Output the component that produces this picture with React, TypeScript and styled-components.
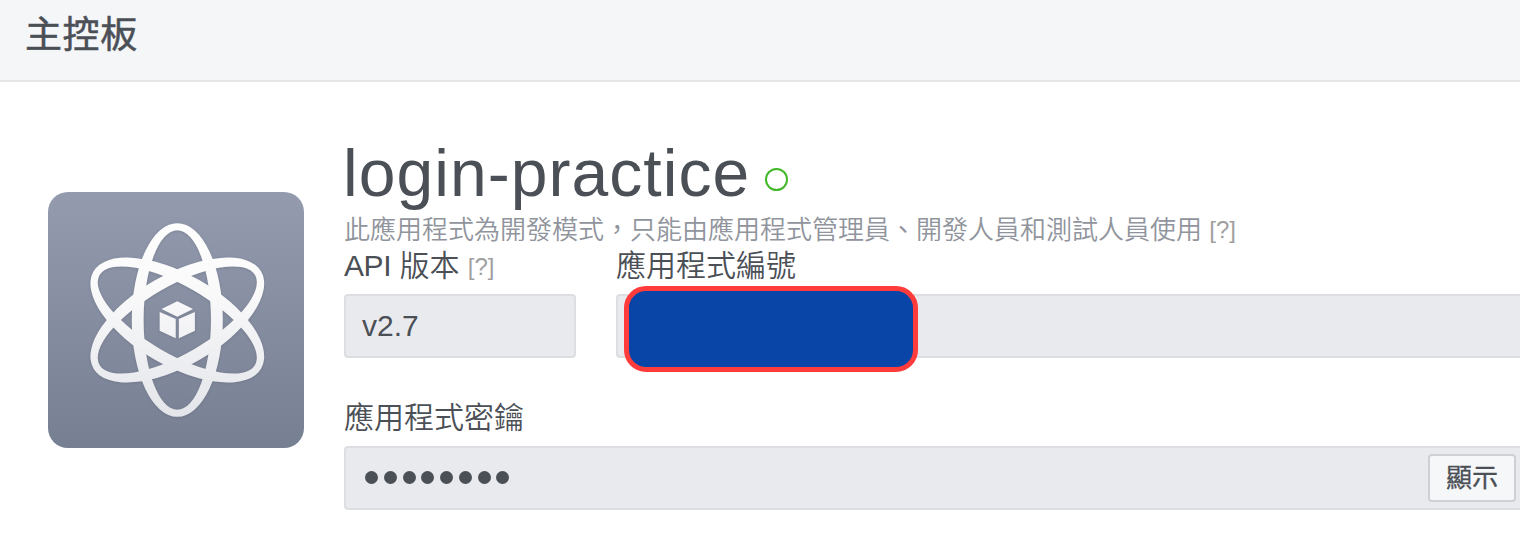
import React from "react";
import styled, { createGlobalStyle } from "styled-components";

const GlobalStyle = createGlobalStyle`
  * { box-sizing: border-box; }
  body {
    margin: 0;
    background: #fff;
    color: #4b4f56;
    font-family: "Liberation Sans", "Noto Sans CJK TC", sans-serif;
    overflow: hidden;
  }
`;

const Page = styled.div`
  width: 100%;
  height: 558px;
  overflow: hidden;
`;

const Header = styled.header`
  height: 82px;
  padding: 8px 0 0 25px;
  background: #f5f6f8;
  border-bottom: 2px solid #e5e5e5;
`;

const HeaderTitle = styled.h1`
  margin: 0;
  font-size: 37px;
  line-height: 56px;
  font-weight: 400;
  letter-spacing: 0.6px;
  -webkit-text-stroke: 0.5px currentColor;
`;

const Main = styled.main`
  display: flex;
  gap: 40px;
  padding: 60px 0 0 48px;
`;

const AppIcon = styled.svg`
  flex: none;
  width: 256px;
  height: 256px;
  margin-top: 50px;
`;

const Details = styled.section`
  flex: 1;
  min-width: 0;
`;

const NameRow = styled.div`
  display: flex;
  height: 72px;
`;

const AppName = styled.h2`
  margin: 0;
  width: 421px;
  font-size: 66px;
  line-height: 62px;
  font-weight: 400;
  letter-spacing: 1.05px;
  text-indent: -1px;
  white-space: nowrap;
`;

const StatusDot = styled.span`
  width: 23px;
  height: 23px;
  margin-top: 26px;
  border: 2px solid #42b72a;
  border-radius: 50%;
`;

const ModeNote = styled.p`
  margin: 0;
  height: 32px;
  font-size: 26px;
  line-height: 32px;
  font-weight: 350;
  color: #90949c;
  white-space: nowrap;
`;

const Help = styled.span<{ $size: number }>`
  position: relative;
  top: -1px;
  font-size: ${(p) => p.$size}px;
  font-weight: 400;
  color: #a0a0a0;
`;

const FieldRow = styled.div`
  display: flex;
  gap: 40px;
`;

const Field = styled.div<{ $width?: number; $top?: number }>`
  position: relative;
  flex: ${(p) => (p.$width ? `0 0 ${p.$width}px` : "1")};
  margin-top: ${(p) => p.$top ?? 0}px;
`;

const Label = styled.div`
  height: 48px;
  font-size: 30px;
  line-height: 40px;
  font-weight: 350;
  white-space: nowrap;
`;

const Latin = styled.span`
  font-weight: 400;
  letter-spacing: -0.4px;
`;

const ValueBox = styled.div<{ $open?: boolean }>`
  display: flex;
  align-items: center;
  justify-content: space-between;
  height: 64px;
  padding: 0 4px 0 16px;
  background: #e9eaed;
  border: 2px solid #dcdee2;
  border-right-width: ${(p) => (p.$open ? 0 : 2)}px;
  border-radius: ${(p) => (p.$open ? "4px 0 0 4px" : "4px")};
  font-size: 30px;
`;

const Redaction = styled.div`
  position: absolute;
  left: 8px;
  top: 40px;
  width: 294px;
  height: 86px;
  background: #0845a7;
  border: 5px solid #ff3b3c;
  border-radius: 22px;
`;

const Mask = styled.span`
  display: flex;
  gap: 5.75px;
  padding: 0 0 1px 3px;
`;

const MaskDot = styled.i`
  width: 13px;
  height: 13px;
  border-radius: 50%;
  background: #4b4f56;
`;

const ShowButton = styled.button`
  width: 88px;
  height: 48px;
  padding: 0 0 1px;
  background: #f6f7f9;
  border: 2px solid #ced0d4;
  border-radius: 4px;
  color: #4b4f56;
  font-family: inherit;
  font-size: 26px;
  font-weight: 400;
  line-height: 36px;
  -webkit-text-stroke: 0.3px currentColor;
`;

const ORBIT =
  "M-45.5 0A45.5 96.8 0 1 1 45.5 0A45.5 96.8 0 1 1 -45.5 0Z M-33.7 0A33.7 89.8 0 1 0 33.7 0A33.7 89.8 0 1 0 -33.7 0Z";

function AtomIcon() {
  return (
    <AppIcon viewBox="0 0 256 256">
      <defs>
        <linearGradient id="tile" x1="0" y1="0" x2="0" y2="1">
          <stop offset="0" stopColor="#949bae" />
          <stop offset="1" stopColor="#777f92" />
        </linearGradient>
        <linearGradient id="fade" x1="0" y1="0" x2="0" y2="1">
          <stop offset="0.1" stopColor="#fff" />
          <stop offset="0.4" stopColor="#f9f9fa" />
          <stop offset="0.9" stopColor="#e2e4e9" />
        </linearGradient>
        <mask id="atom" maskUnits="userSpaceOnUse" x="0" y="0" width="256" height="256">
          <g transform="translate(129.3 128)" fill="#fff" fillRule="evenodd">
            <path d={ORBIT} />
            <path d={ORBIT} transform="rotate(60)" />
            <path d={ORBIT} transform="rotate(-60)" />
            <path d="M0-18.7L15.7-11L0-3.3L-15.7-11Z" />
            <path d="M-17.6-8L-1.6-1V18.3L-17.6 10.7Z" />
            <path d="M17.6-8L1.6-1V18.3L17.6 10.7Z" />
          </g>
        </mask>
        <filter id="edge" x="-5%" y="-5%" width="110%" height="110%">
          <feDropShadow dx="0" dy="0.5" stdDeviation="1.2" floodColor="#4f586c" floodOpacity="0.45" />
        </filter>
      </defs>
      <rect width="256" height="256" rx="20" fill="url(#tile)" />
      <g filter="url(#edge)">
        <rect width="256" height="256" fill="url(#fade)" mask="url(#atom)" />
      </g>
    </AppIcon>
  );
}

export default function App() {
  return (
    <Page lang="zh-Hant">
      <GlobalStyle />
      <Header>
        <HeaderTitle>主控板</HeaderTitle>
      </Header>
      <Main>
        <AtomIcon />
        <Details>
          <NameRow>
            <AppName>login-practice</AppName>
            <StatusDot />
          </NameRow>
          <ModeNote>
            {"此應用程式為開發模式\uFF0C只能由應用程式管理員、開發人員和測試人員使用 "}
            <Help $size={24}>[?]</Help>
          </ModeNote>
          <FieldRow>
            <Field $width={232}>
              <Label>
                <Latin>API</Latin> 版本 <Help $size={24}>[?]</Help>
              </Label>
              <ValueBox>v2.7</ValueBox>
            </Field>
            <Field>
              <Label>應用程式編號</Label>
              <ValueBox $open />
              <Redaction />
            </Field>
          </FieldRow>
          <Field $top={40}>
            <Label>應用程式密鑰</Label>
            <ValueBox $open>
              <Mask>
                {Array.from({ length: 8 }, (_, i) => (
                  <MaskDot key={i} />
                ))}
              </Mask>
              <ShowButton>顯示</ShowButton>
            </ValueBox>
          </Field>
        </Details>
      </Main>
    </Page>
  );
}
